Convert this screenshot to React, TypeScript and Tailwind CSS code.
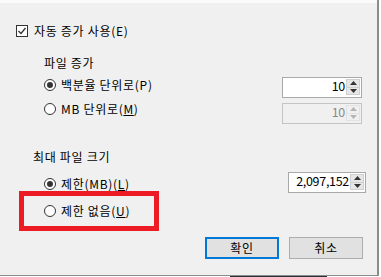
import type { ReactNode } from 'react';

const font = { fontFamily: '"Noto Sans CJK KR", "Noto Sans", sans-serif' };

function Radio({ checked, children }: { checked?: boolean; children: ReactNode }) {
  return (
    <div className="flex items-center gap-[5px] h-[14px]">
      <span className="w-[12px] h-[12px] rounded-full border border-[#333333] bg-white flex items-center justify-center shrink-0">
        {checked && <span className="w-[6px] h-[6px] rounded-full bg-[#333333]" />}
      </span>
      <span className="text-[12px] leading-[14px] tracking-[0.7px] text-black whitespace-nowrap">{children}</span>
    </div>
  );
}

function Arrow({ up, disabled }: { up?: boolean; disabled?: boolean }) {
  return (
    <svg width="7" height="4" viewBox="0 0 7 4">
      <path d={up ? 'M0 4 L3.5 0 L7 4 Z' : 'M0 0 L3.5 4 L7 0 Z'} fill={disabled ? '#b5b5b5' : '#333333'} />
    </svg>
  );
}

function Spin({ value, width, disabled }: { value: string; width: string; disabled?: boolean }) {
  return (
    <div
      className={`${width} h-[21px] border flex items-stretch p-[1px] ${
        disabled ? 'border-[#c4c4c4] bg-[#f0f0f0]' : 'border-[#a9a9a9] bg-white'
      }`}
    >
      <div
        className={`flex-1 flex items-center justify-end pb-[3px] text-[12.5px] leading-none tracking-[-0.3px] ${
          disabled ? 'text-[#8a8a8a]' : 'text-black'
        }`}
      >
        {value}
      </div>
      <div className="w-[14px] flex flex-col ml-[1px] mb-[1px]">
        <div
          className={`flex-1 flex items-center justify-center border ${
            disabled ? 'border-[#e3e3e3] bg-[#f0f0f0]' : 'border-[#cfcfcf] bg-[#e6e6e6]'
          }`}
        >
          <Arrow up disabled={disabled} />
        </div>
        <div
          className={`flex-1 flex items-center justify-center border border-t-0 ${
            disabled ? 'border-[#e3e3e3] bg-[#f0f0f0]' : 'border-[#cfcfcf] bg-[#e6e6e6]'
          }`}
        >
          <Arrow disabled={disabled} />
        </div>
      </div>
    </div>
  );
}

export default function App() {
  return (
    <div className="w-[381px] h-[277px] bg-white overflow-hidden flex flex-col" style={font}>
      <div className="w-[379px] h-[276px] shrink-0 border-r-2 border-b border-[#8c8c8c] bg-[#f0f0f0] flex flex-col">
        {/* top strip */}
        <div className="h-[3px] bg-[#fbfbfb]" />

        {/* auto grow checkbox */}
        <div className="mt-[21px] h-[13px] pl-[16px] flex items-center gap-[6px]">
          <span className="w-[12px] h-[12px] border border-[#333333] bg-white flex items-center justify-center">
            <svg width="10" height="10" viewBox="0 0 10 10">
              <path d="M1.5 5 L4 7.5 L8.5 2" fill="none" stroke="#333333" strokeWidth="1.3" />
            </svg>
          </span>
          <span className="text-[12px] leading-[14px] tracking-[0.7px] text-black">자동 증가 사용(E)</span>
        </div>

        {/* file growth */}
        <div className="mt-[18px] h-[16px] pl-[44px] text-[12px] leading-[16px] tracking-[0.7px] text-black">파일 증가</div>
        <div className="flex justify-between pl-[44px] pr-[15px]">
          <div className="flex flex-col mt-[7px] gap-[10px]">
            <Radio checked>백분율 단위로(P)</Radio>
            <Radio>
              MB 단위로(<span className="underline">M</span>)
            </Radio>
          </div>
          <div className="flex flex-col mt-[6px] gap-[5px]">
            <Spin value="10" width="w-[80px]" />
            <Spin value="10" width="w-[80px]" disabled />
          </div>
        </div>

        {/* max file size */}
        <div className="mt-[25px] h-[16px] pl-[33px] text-[12px] leading-[16px] tracking-[0.7px] text-black">최대 파일 크기</div>
        <div className="flex justify-between pl-[19px] pr-[11px]">
          <div className="flex flex-col mt-[12px]">
            <div className="pl-[25px]">
              <Radio checked>
                제한(MB)(<span className="underline">L</span>)
              </Radio>
            </div>
            <div className="w-[140px] h-[40px] border-[5px] border-[#ed1c24] flex items-center pl-[20px]">
              <Radio>
                제한 없음(<span className="underline">U</span>)
              </Radio>
            </div>
          </div>
          <div className="mt-[7px]">
            <Spin value="2,097,152" width="w-[78px]" />
          </div>
        </div>

        {/* buttons */}
        <div className="mt-[6px] flex justify-end gap-[10px] pr-[14px]">
          <button className="w-[74px] h-[22px] border-2 border-[#0078d7] bg-[#e1e1e1] text-[12px] leading-none tracking-[0.7px] text-black flex items-center justify-center">
            확인
          </button>
          <button className="w-[74px] h-[22px] border border-[#adadad] bg-[#e1e1e1] text-[12px] leading-none tracking-[0.7px] text-black flex items-center justify-center">
            취소
          </button>
        </div>
      </div>
      <div className="flex h-[1px]">
        <div className="ml-[230px] w-[97px] bg-[#2a2f3a]" />
      </div>
    </div>
  );
}
